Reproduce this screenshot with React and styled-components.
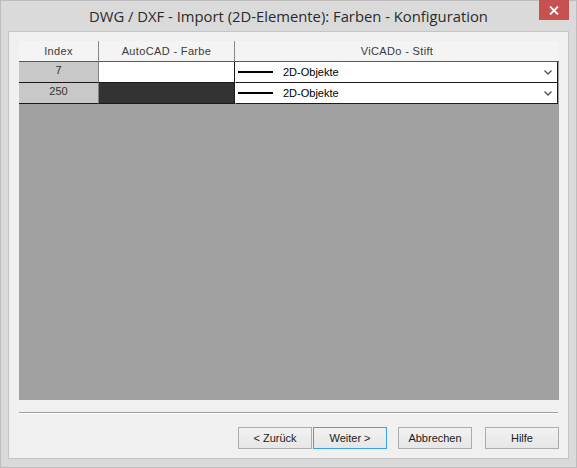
import React from "react";
import styled, { createGlobalStyle } from "styled-components";

const Global = createGlobalStyle`
  html, body { margin: 0; padding: 0; background: #ffffff; }
  #root { width: 577px; height: 468px; }
`;

const Window = styled.div`
  width: 577px;
  height: 468px;
  box-sizing: border-box;
  background: #dadada;
  border: 1px solid #bdbdbd;
  display: flex;
  flex-direction: column;
`;

const TitleBar = styled.div`
  height: 30px;
  display: grid;
  grid-template-columns: 1fr auto 1fr;
  align-items: start;
`;

const Title = styled.div`
  grid-column: 2;
  padding-top: 5px;
  font-family: "Open Sans", "Noto Sans", sans-serif;
  font-size: 14.8px;
  color: #2b2b2b;
  white-space: nowrap;
`;

const CloseButton = styled.div`
  grid-column: 3;
  justify-self: end;
  margin-right: 7px;
  width: 30px;
  height: 20px;
  margin-top: -1px;
  background: #c75050;
  display: flex;
  align-items: center;
  justify-content: center;
`;

const Client = styled.div`
  flex: 1;
  margin: 0 7px 8px 7px;
  background: #f0f0f0;
  border: 1px solid #c4c4c4;
  padding: 9px 9px 9px 10px;
  display: flex;
  flex-direction: column;
`;

const GridPanel = styled.div`
  height: 359px;
  background: #a0a0a0;
  display: flex;
  flex-direction: column;
`;

const Table = styled.div`
  display: grid;
  grid-template-columns: 80px 136px 1fr;
  font-family: "Liberation Sans", Arial, sans-serif;
  font-size: 11px;
  color: #333;
`;

const HeadCell = styled.div`
  height: 20px;
  background: #f4f4f4;
  border-bottom: 1px solid #5a5a5a;
  border-right: ${(p) => (p.$last ? "none" : "1px solid #8a8a8a")};
  display: flex;
  align-items: center;
  justify-content: center;
  letter-spacing: 0.35px;
  color: #3a3a3a;
`;

const IndexCell = styled.div`
  background: #c8c8c8;
  border-bottom: 1px solid #1a1a1a;
  border-right: 1px solid #808080;
  display: flex;
  justify-content: center;
  padding-top: 2px;
  box-sizing: border-box;
  height: 21px;
`;

const ColorCell = styled.div`
  height: 21px;
  box-sizing: border-box;
  background: ${(p) => p.$color};
  border-bottom: 1px solid #1a1a1a;
  border-right: 1px solid #1a1a1a;
`;

const ComboCell = styled.div`
  height: 21px;
  box-sizing: border-box;
  background: #ffffff;
  border-bottom: 1px solid #1a1a1a;
  border-right: 1px solid #1a1a1a;
  border-left: 1px solid #ffffff;
  display: flex;
  align-items: center;
  padding-left: 2px;
  margin-right: 1px;
`;

const PenLine = styled.span`
  width: 35px;
  height: 2px;
  background: #000;
  margin-right: 10px;
`;

const ComboText = styled.span`
  flex: 1;
  color: #000;
`;

const Chevron = styled.svg`
  margin-right: 5px;
`;

const Separator = styled.div`
  margin-top: 12px;
  height: 1px;
  background: #a0a0a0;
  border-bottom: 1px solid #ffffff;
  margin-right: 1px;
`;

const ButtonRow = styled.div`
  margin-top: 13px;
  display: flex;
  justify-content: flex-end;
`;

const Button = styled.button`
  width: 74px;
  height: 22px;
  margin-left: ${(p) => p.$gap}px;
  box-sizing: border-box;
  border: 1px solid ${(p) => (p.$default ? "#3c9ff0" : "#acacac")};
  background: linear-gradient(#f2f2f2, #e6e6e6);
  font-family: "Liberation Sans", Arial, sans-serif;
  font-size: 11px;
  color: #1a1a1a;
  padding: 0;
`;

const rows = [
  { index: "7", color: "#ffffff" },
  { index: "250", color: "#333333" },
];

export default function App() {
  return (
    <>
      <Global />
      <Window>
        <TitleBar>
          <Title>DWG / DXF - Import (2D-Elemente): Farben - Konfiguration</Title>
          <CloseButton>
            <svg width="10" height="9" viewBox="0 0 10 9">
              <path d="M1 0.5 L9 8.5 M9 0.5 L1 8.5" stroke="#fff" strokeWidth="1.8" />
            </svg>
          </CloseButton>
        </TitleBar>
        <Client>
          <GridPanel>
            <Table>
              <HeadCell>Index</HeadCell>
              <HeadCell>AutoCAD - Farbe</HeadCell>
              <HeadCell $last>ViCADo - Stift</HeadCell>
              {rows.map((r) => (
                <React.Fragment key={r.index}>
                  <IndexCell>{r.index}</IndexCell>
                  <ColorCell $color={r.color} />
                  <ComboCell>
                    <PenLine />
                    <ComboText>2D-Objekte</ComboText>
                    <Chevron width="8" height="5" viewBox="0 0 8 5">
                      <path d="M0.5 0.5 L4 4 L7.5 0.5" stroke="#555" strokeWidth="1.4" fill="none" />
                    </Chevron>
                  </ComboCell>
                </React.Fragment>
              ))}
            </Table>
          </GridPanel>
          <Separator />
          <ButtonRow>
            <Button $gap={0}>&lt; Zurück</Button>
            <Button $gap={1} $default>Weiter &gt;</Button>
            <Button $gap={11}>Abbrechen</Button>
            <Button $gap={13}>Hilfe</Button>
          </ButtonRow>
        </Client>
      </Window>
    </>
  );
}
